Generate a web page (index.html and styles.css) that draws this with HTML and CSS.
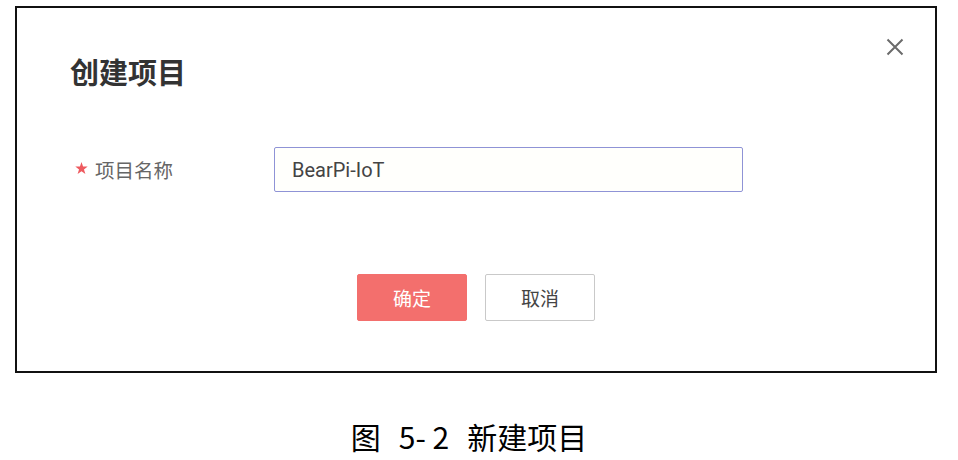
FILE: index.html
```html
<!DOCTYPE html>
<html lang="zh-CN">
<head>
<meta charset="utf-8">
<link rel="stylesheet" href="styles.css">
</head>
<body>
<div class="frame">
  <button class="close" aria-label="关闭">
    <svg width="18" height="18" viewBox="0 0 18 18"><path d="M1.5 1.5 L16.5 16.5 M16.5 1.5 L1.5 16.5" stroke="#6b6b6b" stroke-width="2" fill="none"/></svg>
  </button>
  <h1 class="title">创建项目</h1>
  <div class="row">
    <label class="label"><svg class="star" width="13" height="13" viewBox="0 0 20 20"><polygon points="10,0 12.4,7 19.5,7 13.8,11.4 16,18.5 10,14.2 4,18.5 6.2,11.4 0.5,7 7.6,7" fill="#ee5a5f"/></svg>项目名称</label>
    <div class="input">BearPi-IoT</div>
  </div>
  <div class="actions">
    <button class="btn primary">确定</button>
    <button class="btn">取消</button>
  </div>
</div>
<p class="caption"><span>图</span><span>5- 2</span><span>新建项目</span></p>
</body>
</html>
```
FILE: styles.css
```css
html, body {
  margin: 0;
  padding: 0;
  background: #fff;
}
body {
  font-family: "Noto Sans CJK SC", "Noto Sans", sans-serif;
  color: #333;
}
.frame {
  position: relative;
  box-sizing: border-box;
  width: 922px;
  height: 367px;
  margin: 6px 0 0 15px;
  border: 2px solid #111;
  padding: 0 0 0 53px;
}
.close {
  position: absolute;
  top: 30px;
  right: 31px;
  width: 18px;
  height: 18px;
  padding: 0;
  border: 0;
  background: none;
  display: flex;
}
.title {
  margin: 46px 0 0 0;
  font-size: 29px;
  line-height: 34px;
  font-weight: 700;
  color: #333;
}
.row {
  display: flex;
  align-items: center;
  margin-top: 59px;
  padding-left: 5px;
}
.label {
  width: 199px;
  font-size: 19.5px;
  color: #666;
  display: flex;
  align-items: center;
}
.star {
  margin: 0 7px 3px 0;
}
.input {
  box-sizing: border-box;
  width: 469px;
  height: 45px;
  border: 1px solid #8f93d6;
  border-radius: 2px;
  background: #fffffc;
  padding-left: 17px;
  display: flex;
  align-items: center;
  font-family: Roboto, "Noto Sans", sans-serif;
  font-size: 20px;
  color: #444;
}
.actions {
  display: flex;
  justify-content: center;
  gap: 18px;
  margin: 82px 0 0 -53px;
}
.btn {
  box-sizing: border-box;
  width: 110px;
  height: 47px;
  border: 1px solid #c9c9c9;
  border-radius: 2px;
  background: #fff;
  font-family: "Noto Sans CJK SC", sans-serif;
  font-size: 19px;
  color: #444;
  padding: 0;
}
.btn.primary {
  background: #f36f6d;
  border-color: #f36f6d;
  color: #fff;
}
.caption {
  display: flex;
  justify-content: center;
  gap: 18px;
  margin: 43px 0 0 0;
  padding-right: 20px;
  font-size: 30px;
  line-height: 40px;
  color: #000;
}
```
